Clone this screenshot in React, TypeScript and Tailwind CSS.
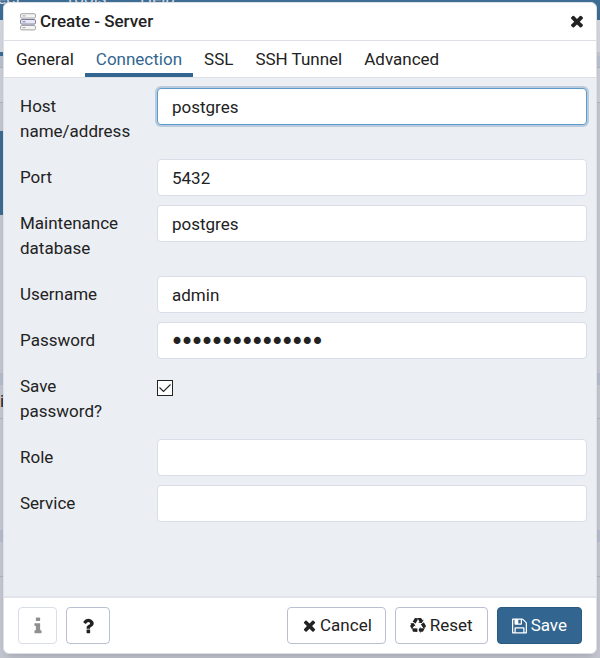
import React, { useState } from 'react';

interface IconProps {
  className?: string;
}

const CloseIcon: React.FC<IconProps> = ({ className }) => (
  <svg viewBox="0 0 1792 1792" fill="currentColor" className={className} aria-hidden="true">
    <path d="M1490 1322q0 40-28 68l-136 136q-28 28-68 28t-68-28l-294-294-294 294q-28 28-68 28t-68-28l-136-136q-28-28-28-68t28-68l294-294-294-294q-28-28-28-68t28-68l136-136q28-28 68-28t68 28l294 294 294-294q28-28 68-28t68 28l136 136q28 28 28 68t-28 68l-294 294 294 294q28 28 28 68z" />
  </svg>
);

const InfoIcon: React.FC<IconProps> = ({ className }) => (
  <svg viewBox="0 0 1792 1792" fill="currentColor" className={className} aria-hidden="true">
    <path d="M1216 1344v128q0 26-19 45t-45 19h-512q-26 0-45-19t-19-45v-128q0-26 19-45t45-19h64v-384h-64q-26 0-45-19t-19-45v-128q0-26 19-45t45-19h384q26 0 45 19t19 45v576h64q26 0 45 19t19 45zm-128-1152v192q0 26-19 45t-45 19h-256q-26 0-45-19t-19-45v-192q0-26 19-45t45-19h256q26 0 45 19t19 45z" />
  </svg>
);

const HelpIcon: React.FC<IconProps> = ({ className }) => (
  <svg viewBox="0 0 1792 1792" fill="currentColor" className={className} aria-hidden="true">
    <path d="M1088 1256v240q0 16-12 28t-28 12h-240q-16 0-28-12t-12-28v-240q0-16 12-28t28-12h240q16 0 28 12t12 28zm316-600q0 54-15.5 101t-35 76.5-55 59.5-57.5 43.5-61 35.5q-41 23-68.5 65t-27.5 67q0 17-12 32.5t-28 15.5h-240q-15 0-25.5-18.5t-10.5-37.5v-45q0-83 65-156.5t143-108.5q59-27 84-56t25-76q0-42-46.5-74t-107.5-32q-65 0-108 29-35 25-107 115-13 16-31 16-12 0-25-8l-164-125q-13-10-15.5-25t5.5-28q160-266 464-266 80 0 161 31t146 83 106 127.5 41 158.5z" />
  </svg>
);

const RecycleIcon: React.FC<IconProps> = ({ className }) => (
  <svg viewBox="0 0 1792 1792" fill="currentColor" className={className} aria-hidden="true">
    <path d="M836 1169l-15 368-2 22-420-29q-36-3-67-31.5t-47-65.5q-11-27-14.5-55t4-65 12-55 21.5-64 19-53q78 12 509 28zm-387-586l180 379-147-92q-63 72-111.5 144.5t-72.5 125-39.5 94.5-18.5 63l-4 21-190-357q-17-26-18-56t6-47l8-18q35-63 114-188l-140-86zm1231 517l-188 359q-12 29-36.5 46.5t-43.5 20.5l-18 4q-71 7-219 12l8 164-230-367 211-362 7 173q170 16 283 5t170-33zm-785-924q-47 63-265 435l-317-187-19-12 225-356q20-31 60-45t80-10q24 2 48.5 12t42 21 41.5 33 36 34.5 36 39.5 32 35zm655 307l212 363q18 37 12.5 76t-27.5 74q-13 20-33 37t-38 28-48.5 22-47 16-51.5 14-46 12q-34-72-265-436l313-195zm-143-226l142-83-220 373-419-20 151-86q-34-89-75-166t-75.5-123.5-64.5-80-47-46.5l-17-13 405 1q31-3 58 10.5t39 28.5l11 15q39 61 112 190z" />
  </svg>
);

const SaveIcon: React.FC<IconProps> = ({ className }) => (
  <svg viewBox="128 0 1536 1792" fill="currentColor" className={className} aria-hidden="true">
    <path d="M512 1536h768v-384h-768v384zm896 0h128v-896q0-14-10-38.5t-20-34.5l-281-281q-10-10-34-20t-39-10v416q0 40-28 68t-68 28h-576q-40 0-68-28t-28-68v-416h-128v1280h128v-416q0-40 28-68t68-28h832q40 0 68 28t28 68v416zm-384-928v-320q0-13-9.5-22.5t-22.5-9.5h-192q-13 0-22.5 9.5t-9.5 22.5v320q0 13 9.5 22.5t22.5 9.5h192q13 0 22.5-9.5t9.5-22.5zm640 32v928q0 40-28 68t-68 28h-1344q-40 0-68-28t-28-68v-1344q0-40 28-68t68-28h928q40 0 88 20t76 48l280 280q28 28 48 76t20 88z" />
  </svg>
);

const ServerIcon: React.FC<IconProps> = ({ className }) => (
  <svg viewBox="0 0 16 18" fill="none" className={className} aria-hidden="true">
    <rect x="0.5" y="0.7" width="15" height="4.4" rx="1.3" fill="#f4f4f4" stroke="#a3a3a3" />
    <rect x="0.5" y="6.5" width="15" height="4.6" rx="1.3" fill="#e9e9f5" stroke="#77779b" />
    <rect x="0.5" y="12.5" width="15" height="4.4" rx="1.3" fill="#f4f4f4" stroke="#a3a3a3" />
    <path d="M2.5 2.9h3M2.5 14.7h3" stroke="#a3a3a3" />
    <path d="M2.5 8.8h3" stroke="#77779b" />
  </svg>
);

const tabs = ['General', 'Connection', 'SSL', 'SSH Tunnel', 'Advanced'];

const rowClass = 'grid grid-cols-[137px_1fr] items-start';
const labelClass = 'w-28 py-1.5 leading-[25px]';
const inputClass = 'h-[37px] w-full rounded border bg-white px-[14px] text-[#222] outline-none';

interface FieldProps {
  id: string;
  label: string;
  value?: string;
  type?: string;
  focused?: boolean;
}

const Field: React.FC<FieldProps> = ({ id, label, value = '', type = 'text', focused }) => (
  <div className={rowClass}>
    <label htmlFor={id} className={labelClass}>{label}</label>
    <input
      id={id}
      type={type}
      defaultValue={value}
      className={`${inputClass} ${
        focused ? 'border-[#5b9bc9] ring-2 ring-[#b9cbdc]' : 'border-[#d9dde8]'
      } ${type === 'password' ? 'font-["DejaVu_Sans",sans-serif] [-webkit-text-stroke:2px_#222]' : ''}`}
    />
  </div>
);

/* Browser window that the dialog dims */
const Backdrop = () => (
  <div className="absolute inset-0 flex flex-col overflow-hidden bg-[#c5c8d1]" aria-hidden="true">
    <div className="flex h-5 items-end bg-[#3d6c94] pb-3 leading-5 text-[#d5d8df]">
      <span className="-ml-7 w-[93px]">Object</span>
      <span className="w-[75px]">Tools</span>
      <span>Help</span>
    </div>
    <div className="h-8 bg-[#d5d8df]" />
    <div className="h-1 w-1 bg-[#3d6c94]" />
    <div className="h-3 border-b border-[#b0b4be] bg-[#bcc3d0]" />
    <div className="h-[35px] border-b border-[#b0b4be] bg-[#cdd0d8]" />
    <div className="h-7" />
    <div className="h-[84px] w-1 bg-[#3d6c94]" />
    <div className="h-[158px]" />
    <div className="h-3 bg-[#b6bdce]" />
    <div className="h-[34px] border-b border-[#b0b4be] leading-8">i</div>
    <div className="h-[111px]" />
    <div className="h-3 bg-[#b6bdce]" />
    <div className="h-[35px] border-b border-[#b0b4be]" />
  </div>
);

export default function App() {
  const [activeTab, setActiveTab] = useState('Connection');
  const [savePassword, setSavePassword] = useState(true);

  return (
    <div className="relative min-h-screen px-[3px] pt-0.5 pb-1 flex font-[Roboto,sans-serif] text-[17px] text-[#222]">
      <Backdrop />
      <div role="dialog" aria-labelledby="dialog-title" className="relative flex grow flex-col overflow-hidden rounded-md border border-[#dde0e6] bg-white shadow-lg">
        {/* Title bar */}
        <div className="flex h-[38px] items-center border-b border-[#dde0e6] pl-4 pr-2.5">
          <ServerIcon className="h-[18px] w-4" />
          <h1 id="dialog-title" className="ml-1 grow font-medium">Create - Server</h1>
          <button type="button" aria-label="Close" className="pb-0.5 text-[#222]">
            <CloseIcon className="size-[18px]" />
          </button>
        </div>

        {/* Tabs */}
        <div role="tablist" className="flex h-[37px] border-b border-[#dde0e6] pl-px">
          {tabs.map((tab) => (
            <button
              key={tab}
              type="button"
              role="tab"
              aria-selected={tab === activeTab}
              onClick={() => setActiveTab(tab)}
              className={`border-b-4 px-[11px] pt-1.5 ${
                tab === activeTab ? 'border-[#326690] text-[#326690]' : 'border-transparent'
              }`}
            >
              {tab}
            </button>
          ))}
        </div>

        {/* Connection form */}
        <form className="flex grow flex-col gap-[9px] bg-[#ebeef3] pt-2.5 pl-4 pr-[9px]">
          <Field id="host" label="Host name/address" value="postgres" focused />
          <Field id="port" label="Port" value="5432" />
          <Field id="maintenance-db" label="Maintenance database" value="postgres" />
          <Field id="username" label="Username" value="admin" />
          <Field id="password" label="Password" value="postgrespasswrd" type="password" />
          <div className={rowClass}>
            <label htmlFor="save-password" className={labelClass}>Save password?</label>
            <div className="mt-3 grid size-4 place-items-center">
              <input
                id="save-password"
                type="checkbox"
                checked={savePassword}
                onChange={(e) => setSavePassword(e.target.checked)}
                className="col-start-1 row-start-1 size-4 appearance-none border border-[#222] bg-white"
              />
              {savePassword && (
                <svg viewBox="0 0 16 16" fill="none" className="pointer-events-none col-start-1 row-start-1 size-4">
                  <path d="M2.5 7.5l4 4 7-7" stroke="#222" strokeWidth="1.1" />
                </svg>
              )}
            </div>
          </div>
          <Field id="role" label="Role" />
          <Field id="service" label="Service" />
        </form>

        {/* Footer */}
        <div className="flex items-center border-t-2 border-[#e1e4ea] px-[14px] py-[9px]">
          <button type="button" disabled aria-label="Info" className="grid h-[37px] w-[39px] place-items-center rounded border border-[#d9dde8] text-[#909090]">
            <InfoIcon className="size-5" />
          </button>
          <button type="button" aria-label="Help" className="ml-[9px] grid h-[37px] w-11 place-items-center rounded border border-[#b9c0d2] text-[#222]">
            <HelpIcon className="size-5" />
          </button>
          <div className="ml-auto flex gap-[9px]">
            <button type="button" className="flex h-[37px] items-center gap-0.5 rounded border border-[#b9c0d2] px-[13px]">
              <CloseIcon className="size-[17px]" />
              Cancel
            </button>
            <button type="button" className="flex h-[37px] items-center gap-1 rounded border border-[#b9c0d2] px-[14px]">
              <RecycleIcon className="size-4" />
              Reset
            </button>
            <button type="button" className="flex h-[37px] items-center gap-1 rounded border border-[#2b5a80] bg-[#326690] px-[14px] text-white">
              <SaveIcon className="h-[18px] w-[15px]" />
              Save
            </button>
          </div>
        </div>
      </div>
    </div>
  );
}
